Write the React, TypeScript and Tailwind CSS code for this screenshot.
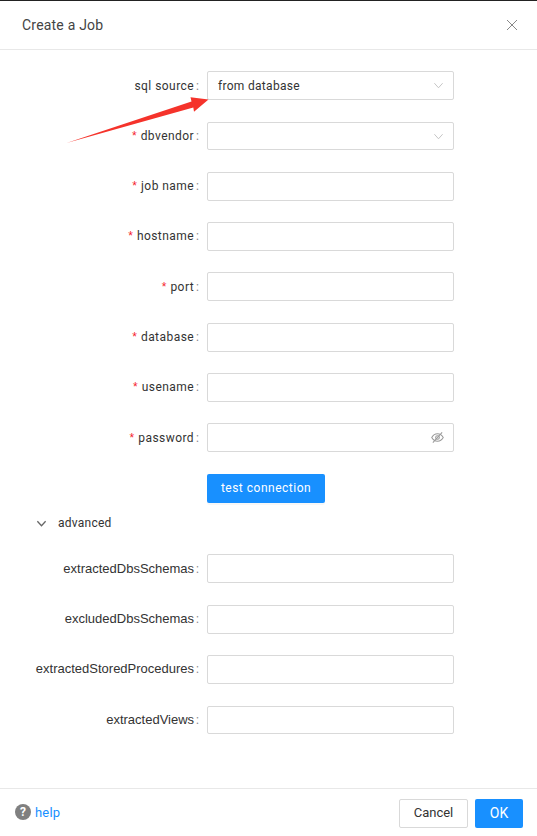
import React from 'react';

const Label = ({ text, required, raise, arial }: { text: string; required?: boolean; raise?: boolean; arial?: boolean }) => (
  <div className={`w-[207px] shrink-0 flex justify-end items-center pr-[8px] text-[12px] text-[#333] ${raise ? 'pb-[2px]' : ''}`}>
    {required && <span className="text-[#f5222d] mr-[4px] font-['Liberation_Sans']">*</span>}
    <span className={arial ? "font-['Liberation_Sans'] text-[13px]" : 'tracking-[0.45px]'}>{text}</span>
    <span className="ml-[2px] text-[#888]">:</span>
  </div>
);

const Chevron = ({ className }: { className: string }) => (
  <svg viewBox="0 0 12 12" className={className} fill="none" stroke="currentColor" strokeWidth="1">
    <path d="M1.5 3.5 L6 8.5 L10.5 3.5" />
  </svg>
);

const EyeOff = () => (
  <svg viewBox="0 0 14 14" className="w-[13px] h-[13px] text-[#999]" fill="none" stroke="currentColor" strokeWidth="1.1">
    <path d="M0.8 7 C2.5 4 4.5 3 7 3 C9.5 3 11.5 4 13.2 7 C11.5 10 9.5 11 7 11 C4.5 11 2.5 10 0.8 7 Z" />
    <circle cx="7" cy="7" r="2" />
    <path d="M2 12.5 L12 1.5" />
  </svg>
);

const Row = ({ label, required, value, icon, raise, short, arial, className }: {
  label: string; required?: boolean; value?: string; icon?: React.ReactNode; raise?: boolean; short?: boolean; arial?: boolean; className: string;
}) => (
  <div className={`flex ${short ? 'h-[28px]' : 'h-[29px]'} ${className}`}>
    <Label text={label} required={required} raise={raise} arial={arial} />
    <div className="w-[247px] h-full border border-[#d9d9d9] rounded-[2px] flex items-center justify-between pl-[10px] pr-[9px] text-[12px] text-[#333] tracking-[0.3px]">
      <span>{value}</span>
      {icon}
    </div>
  </div>
);

const arrow = <Chevron className="w-[11px] h-[11px] text-[#bfbfbf]" />;

export default function App() {
  return (
    <div className="relative w-[537px] h-[836px] bg-white overflow-hidden font-['Roboto',sans-serif]">
      <div className="h-px bg-[#222]" />
      <div className="h-[48px] flex items-center justify-between pl-[22px] pr-[19px] text-[14px] text-[#444] border-b border-[#e8e8e8] box-content">
        <span className="tracking-[0.2px]">Create a Job</span>
        <svg viewBox="0 0 12 12" className="w-[12px] h-[12px] text-[#888]" fill="none" stroke="currentColor" strokeWidth="1">
          <path d="M1 1 L11 11 M11 1 L1 11" />
        </svg>
      </div>

      <div className="h-[738px] pt-[21px]">
        <Row label="sql source" value="from database" icon={arrow} className="" />
        <Row label="dbvendor" required icon={arrow} short className="mt-[22px]" />
        <Row label="job name" required raise className="mt-[22px]" />
        <Row label="hostname" required raise className="mt-[21px]" />
        <Row label="port" required className="mt-[21px]" />
        <Row label="database" required raise className="mt-[22px]" />
        <Row label="usename" required raise className="mt-[21px]" />
        <Row label="password" required icon={<EyeOff />} className="mt-[21px]" />

        <div className="mt-[22px] pl-[207px]">
          <button className="w-[118px] h-[29px] pb-[2px] bg-[#1890ff] rounded-[2px] text-white text-[12px] tracking-[0.5px] shadow-[0_2px_0_rgba(0,0,0,0.03)]">
            test connection
          </button>
        </div>

        <div className="mt-[11px] h-[18px] flex items-center pl-[36px] text-[12px] text-[#333] tracking-[0.25px]">
          <svg viewBox="0 0 12 12" className="w-[11px] h-[11px] text-[#666]" fill="none" stroke="currentColor" strokeWidth="1.4">
            <path d="M1.5 3.5 L6 8.5 L10.5 3.5" />
          </svg>
          <span className="ml-[11px]">advanced</span>
        </div>

        <Row label="extractedDbsSchemas" arial className="mt-[22px]" />
        <Row label="excludedDbsSchemas" arial raise className="mt-[22px]" />
        <Row label="extractedStoredProcedures" arial raise className="mt-[21px]" />
        <Row label="extractedViews" arial short className="mt-[22px]" />
      </div>

      <div className="h-[49px] border-t border-[#e8e8e8] flex items-center justify-between pl-[15px] pr-[14px]">
        <div className="flex items-center">
          <span className="w-[16px] h-[16px] mb-[3px] rounded-full bg-[#808080] text-white text-[12px] font-bold flex items-center justify-center">?</span>
          <span className="ml-[4px] text-[13px] text-[#1890ff] tracking-[0.2px]">help</span>
        </div>
        <div className="flex gap-[7px]">
          <button className="w-[69px] h-[29px] border border-[#d9d9d9] rounded-[2px] text-[13px] text-[#333]">Cancel</button>
          <button className="w-[48px] h-[29px] bg-[#1890ff] rounded-[2px] text-[14px] text-white">OK</button>
        </div>
      </div>

      {/* red annotation arrow drawn over the form */}
      <svg className="absolute left-0 top-0 pointer-events-none" width="537" height="836">
        <path d="M66.5 143 L191.5 101.5 L190.5 97.3 L208.5 99.5 L194 111.7 L193.3 107.5 Z" fill="#f5332b" />
      </svg>
    </div>
  );
}
